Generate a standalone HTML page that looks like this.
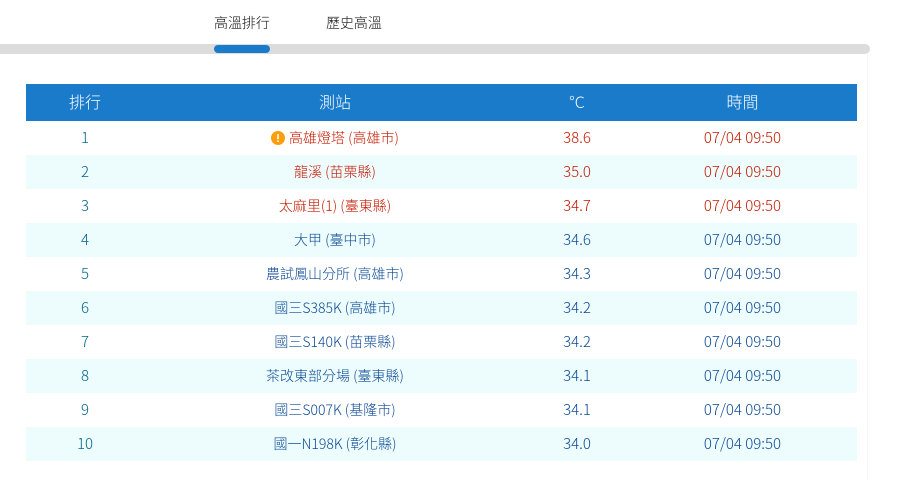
<!DOCTYPE html>
<html lang="zh-Hant">
<head>
<meta charset="utf-8">
<style>
html,body{margin:0;padding:0;background:#fff;width:924px;height:480px;overflow:hidden}
body{position:relative;font-family:"Noto Sans CJK TC","Liberation Sans",sans-serif;font-weight:300}
.tab{position:absolute;top:12px;font-size:14px;line-height:22px;color:#111;white-space:nowrap;letter-spacing:-.05px}
.bar{position:absolute;left:0;top:44px;width:870px;height:10px;background:#dcdcdc;border-radius:0 5px 5px 0}
.thumb{position:absolute;left:214px;top:45px;width:56px;height:8px;background:#1a7bcb;border-radius:4px}
.vline{position:absolute;left:867px;top:54px;width:1px;height:426px;background:#f5f5f5}
table{position:absolute;left:26px;top:84px;width:831px;border-collapse:collapse;table-layout:fixed}
th{height:37px;padding:0;background:#1a7bcb;color:#fff;font-size:16px;font-weight:300;text-align:center;line-height:34px}
th span{display:block;height:37px}
td{height:34px;padding:0;text-align:center;font-size:15px;line-height:34px;color:#0c4a94;white-space:nowrap}
td:first-child{color:#04648a}
tr:nth-child(even) td{background:#edfcfd}
tr.r td{color:#c41800}
tr.r td:first-child{color:#04648a}
td.s{font-size:14px}
.w{display:inline-block;vertical-align:-2px;margin-right:4px}
</style>
</head>
<body>
<div class="tab" style="left:214px">高溫排行</div>
<div class="tab" style="left:326px">歷史高溫</div>
<div class="bar"></div>
<div class="thumb"></div>
<div class="vline"></div>
<table>
<colgroup><col style="width:118px"><col style="width:382px"><col style="width:102px"><col style="width:229px"></colgroup>
<thead><tr><th><span>排行</span></th><th><span>測站</span></th><th><span>°C</span></th><th><span>時間</span></th></tr></thead>
<tbody>
<tr class="r"><td>1</td><td class="s"><svg class="w" width="14" height="14" viewBox="0 0 14 14"><circle cx="7" cy="7" r="7" fill="#ff9d0a"/><rect x="6.2" y="3" width="1.6" height="5.4" rx=".6" fill="#fff"/><rect x="6.2" y="9.4" width="1.6" height="1.6" rx=".6" fill="#fff"/></svg>高雄燈塔 (高雄市)</td><td>38.6</td><td>07/04 09:50</td></tr>
<tr class="r"><td>2</td><td class="s">龍溪 (苗栗縣)</td><td>35.0</td><td>07/04 09:50</td></tr>
<tr class="r"><td>3</td><td class="s">太麻里(1) (臺東縣)</td><td>34.7</td><td>07/04 09:50</td></tr>
<tr><td>4</td><td class="s">大甲 (臺中市)</td><td>34.6</td><td>07/04 09:50</td></tr>
<tr><td>5</td><td class="s">農試鳳山分所 (高雄市)</td><td>34.3</td><td>07/04 09:50</td></tr>
<tr><td>6</td><td class="s">國三S385K (高雄市)</td><td>34.2</td><td>07/04 09:50</td></tr>
<tr><td>7</td><td class="s">國三S140K (苗栗縣)</td><td>34.2</td><td>07/04 09:50</td></tr>
<tr><td>8</td><td class="s">茶改東部分場 (臺東縣)</td><td>34.1</td><td>07/04 09:50</td></tr>
<tr><td>9</td><td class="s">國三S007K (基隆市)</td><td>34.1</td><td>07/04 09:50</td></tr>
<tr><td>10</td><td class="s">國一N198K (彰化縣)</td><td>34.0</td><td>07/04 09:50</td></tr>
</tbody>
</table>
</body>
</html>
